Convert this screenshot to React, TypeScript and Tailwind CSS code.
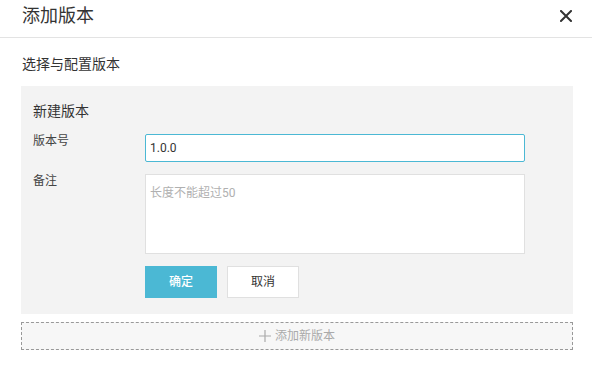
export default function App() {
  return (
    <div className="w-[592px] h-[374px] bg-white text-[#333] font-['Roboto','Noto_Sans_CJK_SC',sans-serif]">
      {/* header */}
      <div className="h-[38px] border-b border-[#e3e3e3] pl-[22px] pr-[20px] flex items-center justify-between">
        <span className="text-[18px] leading-[24px] -mt-[6px]">添加版本</span>
        <svg width="12" height="12" viewBox="0 0 12 12" className="-mt-[5px]">
          <path d="M1 1 L11 11 M11 1 L1 11" stroke="#333" strokeWidth="2" strokeLinecap="square" />
        </svg>
      </div>

      <div className="pl-[22px] pt-[16px] text-[14px] leading-[20px]">选择与配置版本</div>

      {/* panel */}
      <div className="mt-[12px] ml-[21px] w-[552px] h-[228px] bg-[#f3f3f3] pl-[12px] pt-[15px]">
        <div className="text-[14px] leading-[20px]">新建版本</div>

        <div className="mt-[13px] flex items-start">
          <div className="w-[112px] text-[12px] leading-[12px] mt-[1px] text-[#444]">版本号</div>
          <div className="w-[380px] h-[28px] border border-[#4bb8d4] rounded-[2px] bg-white pl-[4px] flex items-center text-[12px] text-[#333]">
            1.0.0
          </div>
        </div>

        <div className="mt-[12px] flex items-start">
          <div className="w-[112px] text-[12px] leading-[12px] mt-[1px] text-[#444]">备注</div>
          <div className="w-[380px] h-[80px] border border-[#e0e0e0] bg-white pl-[4px] pt-[9px] text-[12px] leading-[18px] text-[#b0b0b0]">
            长度不能超过50
          </div>
        </div>

        <div className="mt-[12px] ml-[112px] flex gap-[10px]">
          <button className="w-[72px] h-[32px] bg-[#4bb8d4] text-white text-[12px] font-medium">确定</button>
          <button className="w-[72px] h-[32px] bg-white border border-[#e0e0e0] text-[#333] text-[12px]">取消</button>
        </div>
      </div>

      {/* add new */}
      <div className="mt-[8px] ml-[21px] w-[552px] h-[28px] border border-dashed border-[#999] bg-[#f7f7f7] flex items-center justify-center gap-[4px] text-[12px] text-[#aaa]">
        <svg width="12" height="12" viewBox="0 0 12 12">
          <path d="M6 0 V12 M0 6 H12" stroke="#aaa" strokeWidth="1.2" />
        </svg>
        <span>添加新版本</span>
      </div>
    </div>
  );
}
